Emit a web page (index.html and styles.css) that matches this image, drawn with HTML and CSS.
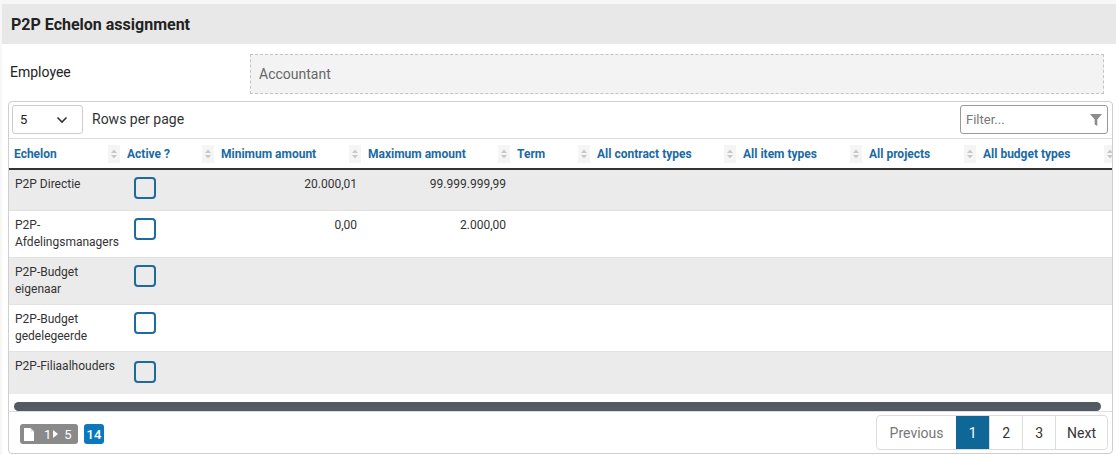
FILE: index.html
```html
<!DOCTYPE html>
<html>
<head>
<meta charset="utf-8">
<link rel="stylesheet" href="styles.css">
</head>
<body>
<div class="panel">
  <div class="panel-head">P2P Echelon assignment</div>
  <div class="field-row">
    <div class="field-label">Employee</div>
    <div class="field-value">Accountant</div>
  </div>
  <div class="card">
    <div class="toolbar">
      <div class="rows-select">
        <span>5</span>
        <svg width="12" height="8" viewBox="0 0 12 8"><path d="M1.5 1.5 L6 6 L10.5 1.5" fill="none" stroke="#333" stroke-width="1.6"/></svg>
      </div>
      <span class="rows-label">Rows per page</span>
      <div class="spacer"></div>
      <div class="filter">
        <span>Filter...</span>
        <svg width="12" height="12" viewBox="0 0 12 12"><path d="M0 0 H12 L7.3 5.6 V12 L4.7 10.4 V5.6 Z" fill="#8c8c8c"/></svg>
      </div>
    </div>
    <div class="scroll">
      <table class="grid">
        <colgroup>
          <col style="width:113px"><col style="width:94px"><col style="width:147px"><col style="width:149px"><col style="width:80px"><col style="width:146px"><col style="width:126px"><col style="width:114px"><col style="width:140px">
        </colgroup>
        <thead>
          <tr>
            <th><div class="th"><span>Echelon</span><i class="sort"></i></div></th>
            <th><div class="th"><span>Active ?</span><i class="sort"></i></div></th>
            <th><div class="th"><span>Minimum amount</span><i class="sort"></i></div></th>
            <th><div class="th"><span>Maximum amount</span><i class="sort"></i></div></th>
            <th><div class="th"><span>Term</span><i class="sort"></i></div></th>
            <th><div class="th"><span>All contract types</span><i class="sort"></i></div></th>
            <th><div class="th"><span>All item types</span><i class="sort"></i></div></th>
            <th><div class="th"><span>All projects</span><i class="sort"></i></div></th>
            <th><div class="th"><span>All budget types</span><i class="sort"></i></div></th>
          </tr>
        </thead>
        <tbody>
          <tr class="odd r1"><td>P2P Directie</td><td><span class="cb"></span></td><td class="num">20.000,01</td><td class="num">99.999.999,99</td><td></td><td></td><td></td><td></td><td></td></tr>
          <tr class="r2"><td>P2P-<br>Afdelingsmanagers</td><td><span class="cb"></span></td><td class="num">0,00</td><td class="num">2.000,00</td><td></td><td></td><td></td><td></td><td></td></tr>
          <tr class="odd"><td>P2P-Budget<br>eigenaar</td><td><span class="cb"></span></td><td></td><td></td><td></td><td></td><td></td><td></td><td></td></tr>
          <tr class="r4"><td>P2P-Budget<br>gedelegeerde</td><td><span class="cb"></span></td><td></td><td></td><td></td><td></td><td></td><td></td><td></td></tr>
          <tr class="odd r5"><td>P2P-Filiaalhouders</td><td><span class="cb"></span></td><td></td><td></td><td></td><td></td><td></td><td></td><td></td></tr>
        </tbody>
      </table>
    </div>
    <div class="hscroll"><div class="thumb"></div></div>
    <div class="footer">
      <div class="badges">
        <span class="badge-range">
          <svg width="10" height="13" viewBox="0 0 10 13"><path d="M0 0 H6.5 L10 3.5 V13 H0 Z" fill="#fff"/><path d="M6.5 0 V3.5 H10" fill="#ddd"/></svg>
          <span class="b1">1</span>
          <svg width="5" height="8" viewBox="0 0 5 8"><path d="M0 0 L5 4 L0 8 Z" fill="#fff"/></svg>
          <span class="b5">5</span>
        </span>
        <span class="badge-total">14</span>
      </div>
      <div class="pager">
        <span class="pg prev">Previous</span>
        <span class="pg active">1</span>
        <span class="pg">2</span>
        <span class="pg">3</span>
        <span class="pg">Next</span>
      </div>
    </div>
  </div>
</div>
</body>
</html>
```

FILE: styles.css
```css
* { box-sizing: border-box; }
html, body { margin: 0; padding: 0; }
body {
  background: #f7f7f7;
  font-family: Roboto, "Liberation Sans", Arial, sans-serif;
  color: #333;
  overflow: hidden;
  height: 455px;
}
.panel {
  margin: 4px 0 0 2px;
  background: #fff;
  height: 451px;
}
.panel-head {
  height: 40px;
  background: #e8e8e8;
  padding-left: 9px;
  display: flex;
  align-items: center;
  font-weight: 700;
  font-size: 16px;
  color: #222;
}
.field-row {
  display: flex;
  align-items: center;
  padding: 10px 12px 7px 8px;
}
.field-label {
  width: 240px;
  font-size: 14px;
  color: #222;
  margin-top: -4px;
}
.field-value {
  flex: 1;
  height: 40px;
  border: 1px dashed #c4c4c4;
  background: #f3f3f3;
  display: flex;
  align-items: center;
  padding-left: 8px;
  font-size: 14px;
  color: #666;
}
.card {
  margin-left: 6px;
  width: 1105px;
  height: 353px;
  border: 1px solid #cfcfcf;
  border-radius: 4px;
  display: flex;
  flex-direction: column;
  overflow: hidden;
}
.toolbar {
  display: flex;
  align-items: center;
  padding: 3px 4px 0 3px;
  height: 37px;
  border-bottom: 1px solid #dcdcdc;
}
.rows-select {
  width: 71px;
  height: 29px;
  border: 1px solid #ccc;
  border-radius: 3px;
  display: flex;
  align-items: center;
  justify-content: space-between;
  padding: 0 14px 0 7px;
  font-size: 13px;
  color: #222;
  align-self: flex-start;
}
.rows-label {
  margin-left: 9px;
  font-size: 14px;
  color: #333;
  align-self: flex-start;
  line-height: 29px;
}
.spacer { flex: 1; }
.filter {
  width: 148px;
  height: 29px;
  border: 1px solid #999;
  border-radius: 3px;
  display: flex;
  align-items: center;
  justify-content: space-between;
  padding: 0 5px 0 5px;
  font-size: 13px;
  color: #777;
  align-self: flex-start;
}
.scroll {
  overflow: hidden;
  flex: none;
}
.grid {
  border-collapse: collapse;
  table-layout: fixed;
  width: 1109px;
  font-size: 12px;
}
.grid th {
  height: 30px;
  padding: 0;
  border-bottom: 2px solid #333;
  text-align: left;
}
.th {
  display: flex;
  align-items: center;
  justify-content: space-between;
  padding: 0 2px 0 5px;
  font-weight: 700;
  color: #1b6aa5;
  font-size: 12px;
}
.sort {
  width: 12px;
  height: 18px;
  background: #f5f5f5 url("data:image/svg+xml;utf8,<svg xmlns='http://www.w3.org/2000/svg' width='12' height='18' viewBox='0 0 12 18'><path d='M3 8 L6 4.5 L9 8 Z M3 10 L6 13.5 L9 10 Z' fill='%23c8c8c8'/></svg>") no-repeat center;
  flex: none;
}
.grid td {
  padding: 6px 6px;
  vertical-align: top;
  line-height: 17px;
  color: #333;
  border-bottom: 1px solid #e2e2e2;
  height: 46px;
}
.grid tr.r1 td { height: 41px; }
.grid tr.r2 td { height: 45px; }
.grid tr.r4 td { height: 45px; }
.grid tr.r5 td { height: 43px; border-bottom: none; }
.grid tr.odd td { background: #ebebeb; }
.grid td.num { text-align: right; }
.cb {
  display: block;
  width: 22px;
  height: 22px;
  margin: 1px 0 0 6px;
  border: 2px solid #1d6b9c;
  border-radius: 4px;
}
.grid tr.r5 .cb { margin-top: 3px; }
.hscroll {
  height: 18px;
  padding: 8px 11px 1px 5px;
  border-bottom: 1px solid #dedede;
  background: #fff;
  flex: none;
}
.thumb {
  height: 9px;
  border-radius: 5px;
  background: #535a64;
}
.footer {
  flex: 1;
  display: flex;
  align-items: flex-start;
  justify-content: space-between;
  padding: 3px 4px 0 11px;
}
.badges {
  display: flex;
  gap: 6px;
  margin-top: 9px;
}
.badge-range {
  display: flex;
  align-items: center;
  height: 20px;
  width: 58px;
  background: #8a8a8a;
  border-radius: 3px;
  padding: 0 4px;
  color: #fff;
  font-size: 13px;
}
.badge-range .b1 { margin-left: 10px; }
.badge-range svg:nth-of-type(2) { margin-left: 2px; }
.badge-range .b5 { margin-left: 6px; }
.badge-total {
  height: 20px;
  width: 20px;
  background: #0b78bd;
  border-radius: 3px;
  color: #fff;
  font-size: 13px;
  font-weight: 500;
  display: flex;
  align-items: center;
  justify-content: center;
}
.pager {
  display: flex;
  border: 1px solid #ddd;
  border-radius: 4px;
  height: 35px;
  overflow: hidden;
}
.pg {
  display: flex;
  align-items: center;
  justify-content: center;
  min-width: 33px;
  padding: 0 11px;
  font-size: 14px;
  color: #333;
  border-left: 1px solid #ddd;
}
.pg:first-child { border-left: none; }
.pg.prev { color: #777; width: 79px; }
.pg.active { background: #0f6797; color: #fff; border-left: none; }
```
